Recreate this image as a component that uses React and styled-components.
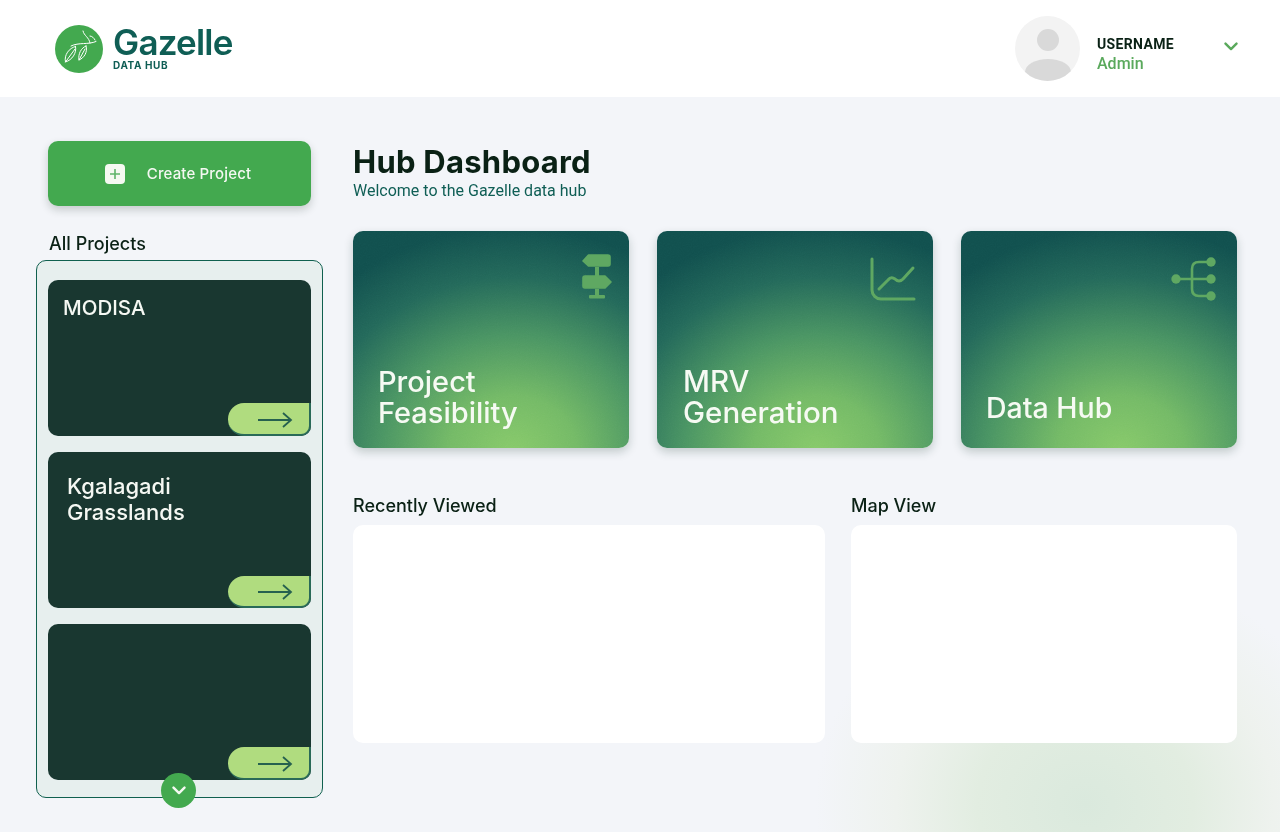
import React from "react";
import styled, { createGlobalStyle } from "styled-components";

const Global = createGlobalStyle`
  html, body { margin: 0; padding: 0; }
  body { font-family: Inter, "Liberation Sans", sans-serif; background: #f3f5f9; }
  * { box-sizing: border-box; }
`;

const Page = styled.div`
  width: 1280px;
  height: 832px;
  overflow: hidden;
  background:
    radial-gradient(ellipse 270px 240px at 1085px 805px, #dae9dd 0%, #e2ede1 40%, #eef2ee 70%, rgba(243,245,249,0) 100%),
    #f3f5f9;
`;

const Header = styled.header`
  height: 97px;
  background: #fff;
  display: flex;
  align-items: center;
  justify-content: space-between;
  padding: 0 42px 0 55px;
`;

const Brand = styled.div`
  display: flex;
  align-items: center;
  gap: 10px;
  margin-top: 1px;
`;

const BrandText = styled.div`
  display: flex;
  flex-direction: column;
  margin-top: -2px;
`;

const BrandName = styled.span`
  display: block;
  font-size: 35px;
  line-height: 33px;
  font-weight: 600;
  letter-spacing: -0.8px;
  color: #0f5e55;
`;

const BrandSub = styled.span`
  display: block;
  font-size: 10px;
  line-height: 12px;
  font-weight: 700;
  letter-spacing: 0.6px;
  color: #0f5e55;
`;

const UserBox = styled.div`
  display: flex;
  align-items: center;
`;

const UserText = styled.div`
  display: flex;
  flex-direction: column;
  margin: 10px 0 0 17px;
  width: 127px;
`;

const UserName = styled.span`
  font-family: Roboto, sans-serif;
  font-size: 14px;
  line-height: 19px;
  font-weight: 700;
  letter-spacing: 0.35px;
  color: #0a2115;
`;

const UserRole = styled.span`
  font-family: Roboto, sans-serif;
  font-size: 16px;
  line-height: 19px;
  font-weight: 500;
  color: #5aa95c;
`;

const ChevronSlot = styled.span`
  display: flex;
  margin-top: -4px;
`;

const Body = styled.div`
  display: flex;
  gap: 42px;
  padding: 44px 43px 0 48px;
`;

const Sidebar = styled.aside`
  width: 263px;
  display: flex;
  flex-direction: column;
`;

const CreateButton = styled.button`
  height: 65px;
  width: 100%;
  border: 0;
  border-radius: 10px;
  background: #43a94f;
  box-shadow: 0 4px 8px rgba(20, 40, 30, 0.2);
  display: flex;
  align-items: center;
  justify-content: center;
  gap: 22px;
  padding: 0 3px 0 0;
  color: #f4f8f2;
  font-family: inherit;
  font-size: 15px;
  font-weight: 500;
  letter-spacing: 0.15px;
`;

const PlusBox = styled.span`
  width: 20px;
  height: 20px;
  border-radius: 4px;
  background: #f5f9f2;
  display: flex;
  align-items: center;
  justify-content: center;
`;

const SideTitle = styled.h2`
  margin: 27px 0 5px 1px;
  font-size: 18px;
  line-height: 22px;
  font-weight: 500;
  color: #0a2115;
`;

const ProjectPanel = styled.div`
  position: relative;
  width: 287px;
  height: 538px;
  margin-left: -12px;
  padding: 19px 11px 0;
  border: 1px solid #10604f;
  border-radius: 10px;
  background: #e7efee;
  display: flex;
  flex-direction: column;
  gap: 16px;
`;

const ProjectCard = styled.div`
  position: relative;
  height: 156px;
  flex: none;
  border-radius: 10px;
  background: #193730;
  color: #f5f8f3;
  padding: ${(p) => p.$pad};
  font-size: ${(p) => p.$size}px;
  line-height: 26px;
  font-weight: 500;
`;

const ArrowTab = styled.div`
  position: absolute;
  right: 0;
  bottom: 0;
  width: 83px;
  height: ${(p) => p.$height}px;
  border-radius: 16px 0 10px 16px;
  border-right: 2px solid #2a6a58;
  border-bottom: 2px solid #2a6a58;
  background: #b0dc7f;
  display: flex;
  align-items: center;
  padding: 2px 0 0 30px;
`;

const ScrollButton = styled.div`
  position: absolute;
  left: 124px;
  bottom: -11px;
  width: 35px;
  height: 35px;
  border-radius: 50%;
  background: #43a94f;
  display: flex;
  align-items: center;
  justify-content: center;
`;

const Main = styled.main`
  width: 884px;
  display: flex;
  flex-direction: column;
`;

const PageTitle = styled.h1`
  margin: 3px 0 0;
  font-size: 31px;
  line-height: 36px;
  font-weight: 700;
  letter-spacing: 0.25px;
  color: #0a2115;
`;

const Subtitle = styled.p`
  margin: 1px 0 0;
  font-family: Roboto, sans-serif;
  font-size: 16px;
  line-height: 20px;
  color: #0f5e55;
`;

const HubRow = styled.div`
  display: grid;
  grid-template-columns: repeat(3, 276px);
  gap: 28px;
  margin-top: 30px;
`;

const HubCard = styled.div`
  position: relative;
  height: 217px;
  overflow: hidden;
  border-radius: 10px;
  background: radial-gradient(ellipse 255px 225px at 58% 102%, #88ca6a 0%, #74ba66 25%, #4a9563 52%, #23695a 78%, #11504e 100%);
  box-shadow: 0 4px 10px rgba(20, 50, 40, 0.22);
  display: flex;
  flex-direction: column;
  padding: 0 0 ${(p) => p.$bottom}px ${(p) => p.$left}px;
`;

const HubIcon = styled.div`
  position: relative;
  align-self: flex-end;
  line-height: 0;
  margin: ${(p) => p.$top}px ${(p) => p.$right}px 0 0;
`;

const HubLabel = styled.div`
  position: relative;
  margin-top: auto;
  font-size: ${(p) => p.$size}px;
  line-height: 31px;
  font-weight: 500;
  color: #f6faf3;
`;

const Grain = styled.svg`
  position: absolute;
  inset: 0;
  width: 100%;
  height: 100%;
  opacity: 0.14;
  mix-blend-mode: soft-light;
`;

const LowerRow = styled.div`
  display: grid;
  grid-template-columns: 472px 386px;
  gap: 26px;
  margin-top: 46px;
`;

const Section = styled.section`
  display: flex;
  flex-direction: column;
`;

const SectionTitle = styled.h2`
  margin: 0 0 8px;
  font-size: 18px;
  line-height: 23px;
  font-weight: 500;
  color: #0a2115;
`;

const BlankPanel = styled.div`
  height: 218px;
  border-radius: 10px;
  background: #fff;
`;

const Arrow = () => (
  <svg width="35" height="16" viewBox="0 0 35 16" fill="none" stroke="#26614f" strokeWidth="1.8">
    <path d="M0 8H33M25 1l8 7-8 7" />
  </svg>
);

const Logo = () => (
  <svg width="48" height="48" viewBox="0 0 48 48" fill="none">
    <circle cx="24" cy="24" r="24" fill="#43a94f" />
    <g stroke="#fff" strokeWidth="1" strokeLinecap="round" strokeLinejoin="round">
      <path d="M16 21C24 17 33 20 41 16.5" />
      <path d="M28 6C29 11 34 12 35 18M35 11C37 11 39 13 40 15" />
      <path d="M20.500 21.500C14 23 9 30 10.500 37C17 35 22 28 20.500 21.500ZM10.500 37L20 24" />
      <path d="M31 21C26 23 23 29 24 35C29 33 33 27 31 21ZM24 35L30 24" />
    </g>
  </svg>
);

const Avatar = () => (
  <svg width="65" height="65" viewBox="0 0 65 65">
    <defs>
      <clipPath id="avatar-clip"><circle cx="32.500" cy="32.500" r="32.500" /></clipPath>
    </defs>
    <circle cx="32.500" cy="32.500" r="32.500" fill="#f3f3f3" />
    <g clipPath="url(#avatar-clip)" fill="#d9d9d9">
      <circle cx="33" cy="24" r="11" />
      <ellipse cx="33" cy="56" rx="23" ry="13" />
    </g>
  </svg>
);

const Chevron = ({ color, w = 14, sw = 2.4 }) => (
  <svg width={w} height={w * 0.65} viewBox="0 0 14 9" fill="none" stroke={color} strokeWidth={sw} strokeLinecap="round" strokeLinejoin="round">
    <path d="M1.500 1.500L7 7l5.500-5.500" />
  </svg>
);

const SignIcon = () => (
  <svg width="30" height="45" viewBox="0 0 30 45" fill="#5fa862" stroke="#5fa862" strokeWidth="1.600" strokeLinejoin="round">
    <path d="M6.500 1H26a2 2 0 0 1 2 2V10a2 2 0 0 1-2 2H6.500L1 7Z" />
    <rect x="13" y="13" width="4" height="9" stroke="none" />
    <path d="M3 22H23L29 28 23 34H3a2 2 0 0 1-2-2V24a2 2 0 0 1 2-2Z" />
    <rect x="13" y="35" width="4" height="7" stroke="none" />
    <rect x="7" y="41" width="16" height="3.500" rx="1" stroke="none" />
  </svg>
);

const ChartIcon = () => (
  <svg width="46" height="44" viewBox="0 0 46 44" fill="none" stroke="#5fa862" strokeWidth="3" strokeLinecap="round" strokeLinejoin="round">
    <path d="M2 2V33a9 9 0 0 0 9 9H44" />
    <path d="M9 32L18 23Q21 19 25 22Q29 26 33 22L43 11" />
  </svg>
);

const TreeIcon = () => (
  <svg width="46" height="46" viewBox="0 0 46 46" fill="none" stroke="#5fa862" strokeWidth="2.600">
    <path d="M5 22H40M40 5H28Q21 5 21 12V32Q21 39 28 39H40" />
    <g fill="#5fa862" stroke="none">
      <circle cx="5" cy="22" r="4.700" />
      <circle cx="40" cy="5" r="4.700" />
      <circle cx="40" cy="22" r="4.700" />
      <circle cx="40" cy="39" r="4.700" />
    </g>
  </svg>
);

const GrainLayer = ({ id }) => (
  <Grain aria-hidden="true">
    <filter id={id}>
      <feTurbulence type="fractalNoise" baseFrequency="0.9" numOctaves="2" stitchTiles="stitch" />
      <feColorMatrix type="saturate" values="0" />
    </filter>
    <rect width="100%" height="100%" filter={`url(#${id})`} />
  </Grain>
);

export default function App() {
  return (
    <Page>
      <Global />
      <Header>
        <Brand>
          <Logo />
          <BrandText>
            <BrandName>Gazelle</BrandName>
            <BrandSub>DATA HUB</BrandSub>
          </BrandText>
        </Brand>
        <UserBox>
          <Avatar />
          <UserText>
            <UserName>USERNAME</UserName>
            <UserRole>Admin</UserRole>
          </UserText>
          <ChevronSlot><Chevron color="#5aa95c" /></ChevronSlot>
        </UserBox>
      </Header>
      <Body>
        <Sidebar>
          <CreateButton>
            <PlusBox>
              <svg width="10" height="10" viewBox="0 0 10 10" stroke="#5fb46a" strokeWidth="1.600">
                <path d="M5 0V10M0 5H10" />
              </svg>
            </PlusBox>
            Create Project
          </CreateButton>
          <SideTitle>All Projects</SideTitle>
          <ProjectPanel>
            <ProjectCard $pad="15px 15px" $size={20.5}>
              MODISA
              <ArrowTab $height={33}><Arrow /></ArrowTab>
            </ProjectCard>
            <ProjectCard $pad="21px 19px" $size={22}>
              Kgalagadi<br />Grasslands
              <ArrowTab $height={32}><Arrow /></ArrowTab>
            </ProjectCard>
            <ProjectCard $pad="0">
              <ArrowTab $height={33}><Arrow /></ArrowTab>
            </ProjectCard>
            <ScrollButton><Chevron color="#f5f9f2" /></ScrollButton>
          </ProjectPanel>
        </Sidebar>
        <Main>
          <PageTitle>Hub Dashboard</PageTitle>
          <Subtitle>Welcome to the Gazelle data hub</Subtitle>
          <HubRow>
            <HubCard $bottom={20} $left={25}>
              <GrainLayer id="grain-a" />
              <HubIcon $top={23} $right={17}><SignIcon /></HubIcon>
              <HubLabel $size={29}>Project<br />Feasibility</HubLabel>
            </HubCard>
            <HubCard $bottom={20} $left={26}>
              <GrainLayer id="grain-b" />
              <HubIcon $top={26} $right={17}><ChartIcon /></HubIcon>
              <HubLabel $size={29.5}>MRV<br />Generation</HubLabel>
            </HubCard>
            <HubCard $bottom={25} $left={25}>
              <GrainLayer id="grain-c" />
              <HubIcon $top={26} $right={20}><TreeIcon /></HubIcon>
              <HubLabel $size={28.500}>Data Hub</HubLabel>
            </HubCard>
          </HubRow>
          <LowerRow>
            <Section>
              <SectionTitle>Recently Viewed</SectionTitle>
              <BlankPanel />
            </Section>
            <Section>
              <SectionTitle>Map View</SectionTitle>
              <BlankPanel />
            </Section>
          </LowerRow>
        </Main>
      </Body>
    </Page>
  );
}
